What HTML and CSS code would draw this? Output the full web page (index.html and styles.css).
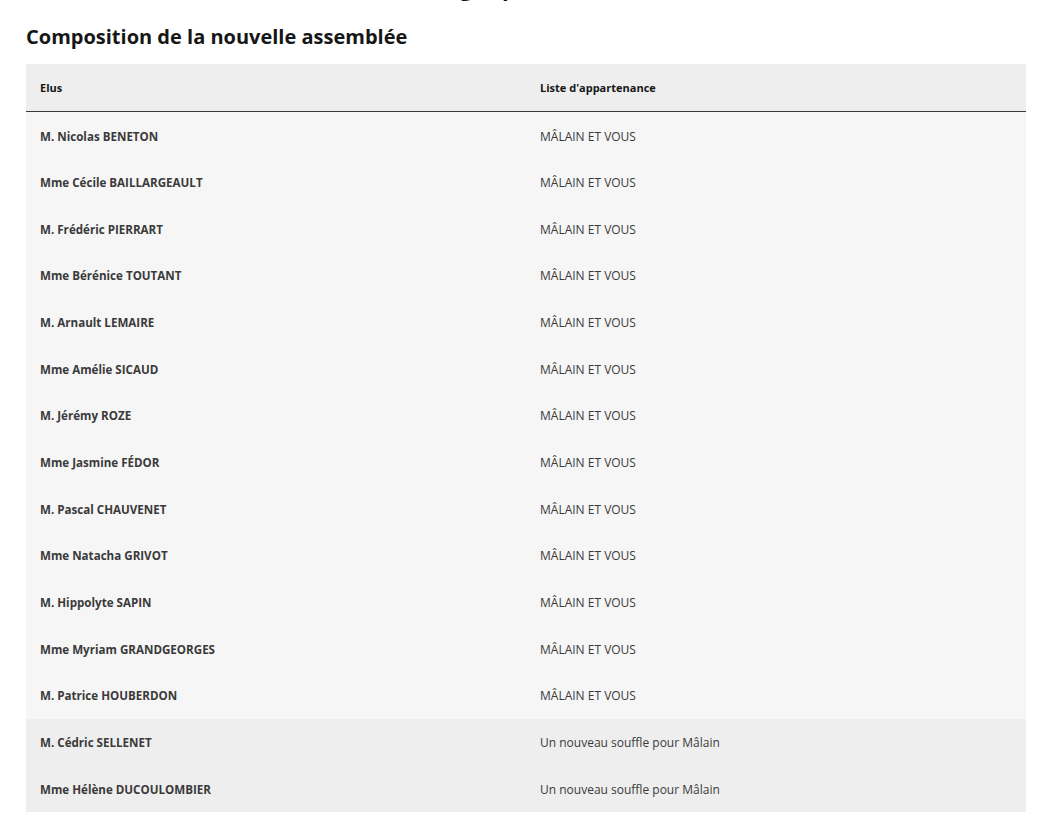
FILE: index.html
```html
<!DOCTYPE html>
<html lang="fr">
<head>
    <meta charset="UTF-8">
    <meta name="viewport" content="width=device-width, initial-scale=1.0">
    <title>Composition de la nouvelle assemblée</title>
    <link rel="stylesheet" href="styles.css">
</head>
<body>

<div class="page">
    <!-- Section heading cut off by the top of the window -->
    <h2 class="prev-title">Nombre de sièges par liste</h2>

    <h3 class="section-title">Composition de la nouvelle assemblée</h3>

    <table class="elus-table">
        <thead>
            <tr>
                <th>Elus</th>
                <th>Liste d'appartenance</th>
            </tr>
        </thead>
        <tbody>
            <tr class="list-a"><td class="name">M. Nicolas BENETON</td><td>MÂLAIN ET VOUS</td></tr>
            <tr class="list-a"><td class="name">Mme Cécile BAILLARGEAULT</td><td>MÂLAIN ET VOUS</td></tr>
            <tr class="list-a"><td class="name">M. Frédéric PIERRART</td><td>MÂLAIN ET VOUS</td></tr>
            <tr class="list-a"><td class="name">Mme Bérénice TOUTANT</td><td>MÂLAIN ET VOUS</td></tr>
            <tr class="list-a"><td class="name">M. Arnault LEMAIRE</td><td>MÂLAIN ET VOUS</td></tr>
            <tr class="list-a"><td class="name">Mme Amélie SICAUD</td><td>MÂLAIN ET VOUS</td></tr>
            <tr class="list-a"><td class="name">M. Jérémy ROZE</td><td>MÂLAIN ET VOUS</td></tr>
            <tr class="list-a"><td class="name">Mme Jasmine FÉDOR</td><td>MÂLAIN ET VOUS</td></tr>
            <tr class="list-a"><td class="name">M. Pascal CHAUVENET</td><td>MÂLAIN ET VOUS</td></tr>
            <tr class="list-a"><td class="name">Mme Natacha GRIVOT</td><td>MÂLAIN ET VOUS</td></tr>
            <tr class="list-a"><td class="name">M. Hippolyte SAPIN</td><td>MÂLAIN ET VOUS</td></tr>
            <tr class="list-a"><td class="name">Mme Myriam GRANDGEORGES</td><td>MÂLAIN ET VOUS</td></tr>
            <tr class="list-a"><td class="name">M. Patrice HOUBERDON</td><td>MÂLAIN ET VOUS</td></tr>
            <tr class="list-b"><td class="name">M. Cédric SELLENET</td><td>Un nouveau souffle pour Mâlain</td></tr>
            <tr class="list-b"><td class="name">Mme Hélène DUCOULOMBIER</td><td>Un nouveau souffle pour Mâlain</td></tr>
        </tbody>
    </table>
</div>

</body>
</html>
```

FILE: styles.css
```css
body {
    margin: 0;
    font-family: "Open Sans", "Liberation Sans", sans-serif;
    color: #161616;
    background-color: #fff;
    overflow: hidden;
}
.page {
    width: 1000px;
    padding: 0 26px;
}

/* Heading of the previous block, only its descenders show */
.prev-title {
    margin: -27px 0 0 0;
    padding-left: 275px;
    font-size: 22px;
    line-height: 28px;
    font-weight: 700;
}

.section-title {
    margin: 22px 0 13px 0;
    font-size: 20px;
    line-height: 28px;
    font-weight: 700;
    color: #161616;
}

/* Table of elected members */
.elus-table {
    width: 100%;
    border-collapse: collapse;
    table-layout: fixed;
    font-size: 12px;
}
.elus-table th {
    text-align: left;
    font-weight: 700;
    font-size: 11px;
    color: #161616;
    background-color: #eee;
    padding: 14px 14px 13px 14px;
    height: 20px;
    line-height: 20px;
    border-bottom: 1px solid #3a3a3a;
}
.elus-table td {
    padding: 14.5px 14px 12.17px 14px;
    line-height: 20px;
    color: #3a3a3a;
}
.elus-table td.name {
    font-weight: 700;
    font-size: 11.6px;
}
.elus-table .list-a {
    background-color: #f6f6f6;
}
.elus-table .list-b {
    background-color: #eee;
}
```
